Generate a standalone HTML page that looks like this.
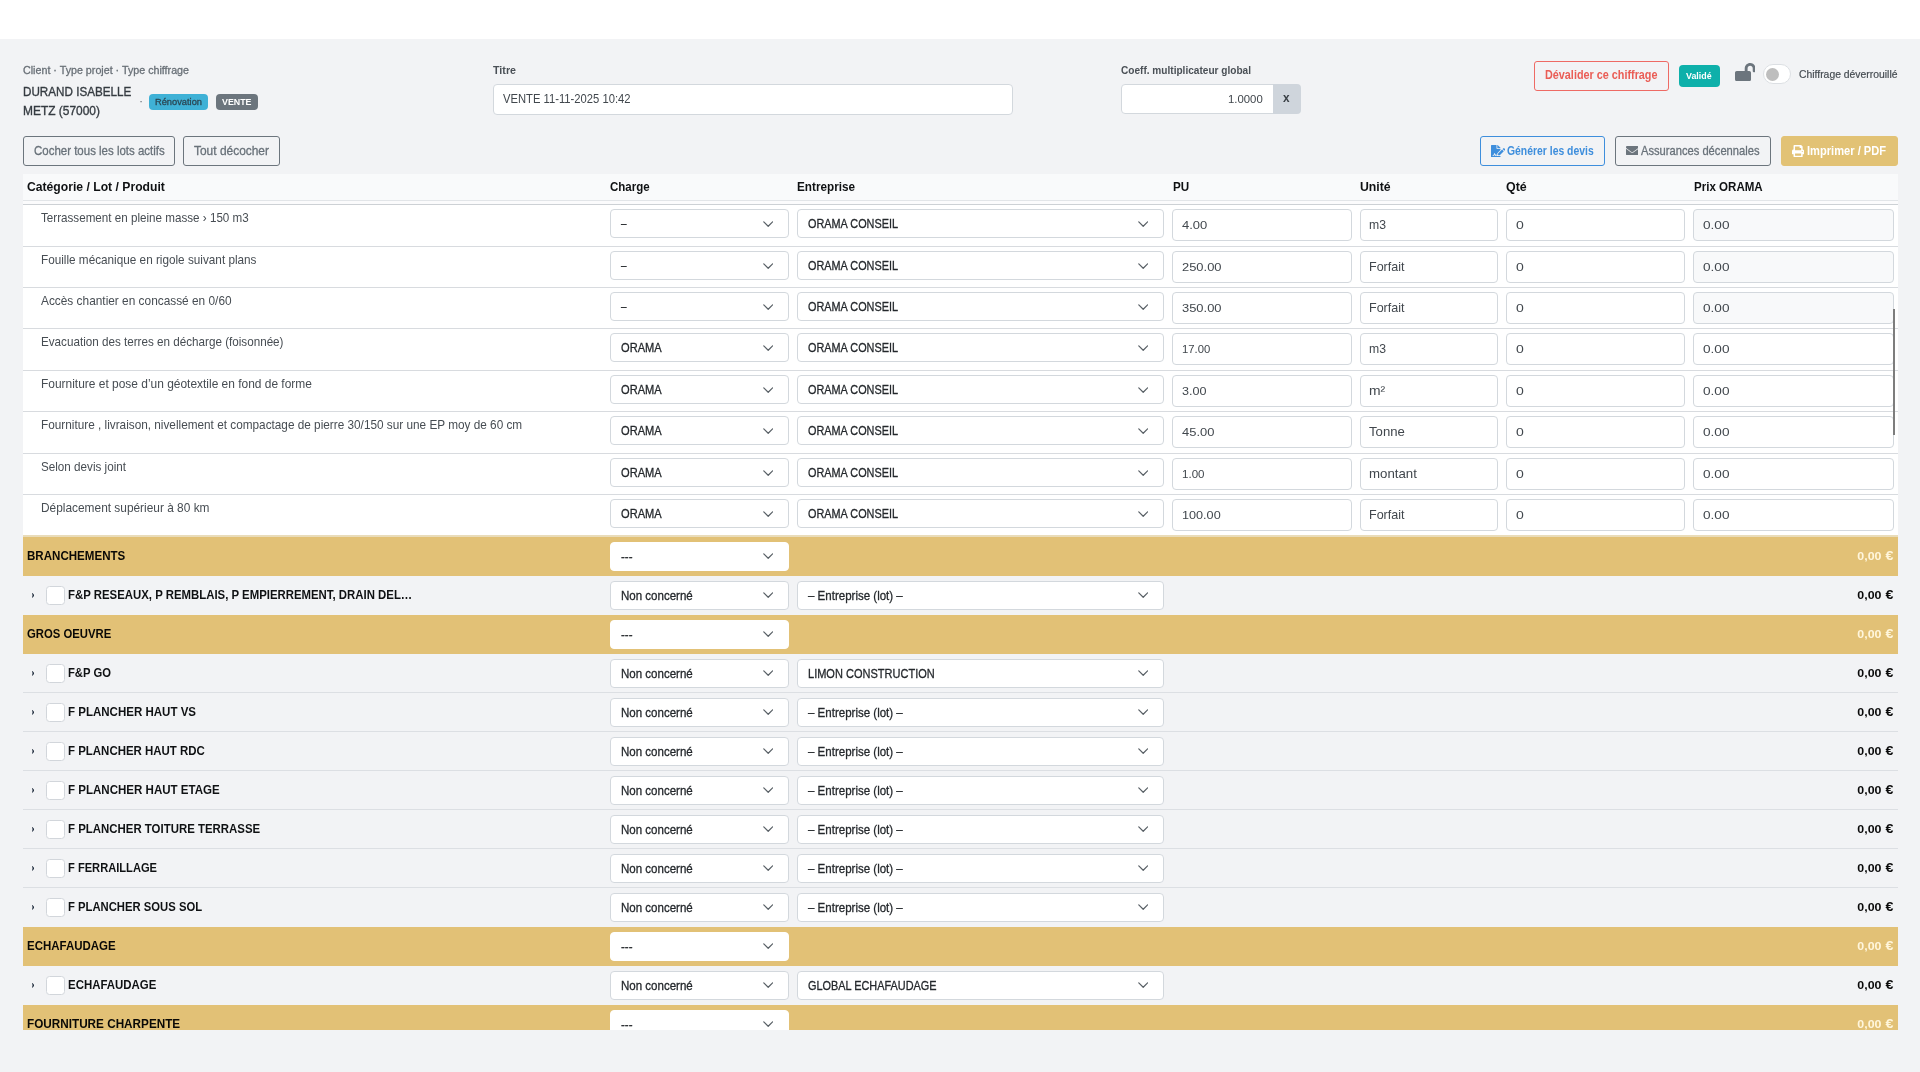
<!DOCTYPE html>
<html lang="fr"><head><meta charset="utf-8"><title>Chiffrage</title>
<style>
*{box-sizing:border-box}
html,body{margin:0;padding:0}
body{width:1920px;height:1072px;overflow:hidden;background:#f2f3f5;font-family:"Liberation Sans",sans-serif;position:relative}
.page{position:absolute;left:0;top:0;width:1920px;height:1072px;will-change:transform}
.topbar{position:absolute;left:0;top:0;width:1920px;height:39px;background:#fff}
.t{position:absolute;white-space:nowrap;line-height:1;display:block}
.badge{position:absolute;border-radius:4px}
.inp,.sel,.addon,.btn,.cb{position:absolute}
.inp{background:#fff;border:1px solid #d3d8dd;border-radius:4px}
.inp.dis{background:#f8f9fa}
.sel{background:#fff;border:1px solid #d3d8dd;border-radius:4px}
.sel.nob{border-color:#fff}
.chev,.ico{position:absolute}
.sw{position:absolute;border-radius:10px;background:#fff;border:1px solid #dcdfe3}
.knob{position:absolute;left:1.8px;top:2.3px;width:13px;height:13px;border-radius:50%;background:#bebebe}
.addon{background:#cfd5dc;border-radius:0 4px 4px 0}
.btn{border:1px solid;border-radius:3px}
.tw{position:absolute;overflow:hidden}
.th{position:absolute;left:0;right:0;background:#f9fafb}
.hl{position:absolute;left:0;right:0;height:1px}
.row{position:absolute;left:0;right:0}
.row.pr{background:#fff}
.row.cat{background:#e2c176}
.row.lot{border-bottom:1px solid #dcdfe3}
.row.lot.nb{border-bottom:none}
.cb{width:18.5px;height:18.5px;background:#fff;border:1px solid #d2d6db;border-radius:3.5px}
</style></head>
<body>
<div class="page">
<div class="topbar"></div>
<div class="hdr">
<span class="t" style="left:23.00px;top:64.85px;font-size:11.4px;font-weight:400;color:#676e75;transform-origin:0 0;transform:scaleX(0.9397);-webkit-text-stroke:0.3px #676e75;">Client · Type projet · Type chiffrage</span>
<span class="t" style="left:23.00px;top:85.25px;font-size:13px;font-weight:400;color:#353b41;transform-origin:0 0;transform:scaleX(0.8976);-webkit-text-stroke:0.35px #353b41;">DURAND ISABELLE</span>
<span class="t" style="left:23.00px;top:104.20px;font-size:13px;font-weight:400;color:#353b41;transform-origin:0 0;transform:scaleX(0.9187);-webkit-text-stroke:0.35px #353b41;">METZ (57000)</span>
<span class="t" style="left:139.00px;top:94.25px;font-size:13px;font-weight:400;color:#6a7178;transform-origin:0 0;transform:scaleX(0.9540);">·</span>
<div class="badge" style="left:149px;top:94px;width:59px;height:15.5px;background:#3fb1d6">
<span class="t" style="left:6.20px;top:2.50px;font-size:9.8px;font-weight:400;color:#2b4653;transform-origin:0 0;transform:scaleX(0.9480);-webkit-text-stroke:0.3px #2b4653;">Rénovation</span>
</div>
<div class="badge" style="left:216px;top:94px;width:42px;height:15.5px;background:#6c757d">
<span class="t" style="left:6.20px;top:2.79px;font-size:9.7px;font-weight:700;color:#ffffff;transform-origin:0 0;transform:scaleX(0.9130);">VENTE</span>
</div>
<span class="t" style="left:493.00px;top:64.85px;font-size:11.4px;font-weight:700;color:#4a5056;transform-origin:0 0;transform:scaleX(0.9394);">Titre</span>
<div class="inp" style="left:493px;top:83.5px;width:520px;height:31px;">
<span class="t" style="left:8.75px;top:7.75px;font-size:13px;font-weight:400;color:#41474d;transform-origin:0 0;transform:scaleX(0.8634);">VENTE 11-11-2025 10:42</span>
</div>
<span class="t" style="left:1120.50px;top:64.85px;font-size:11.4px;font-weight:700;color:#4a5056;transform-origin:0 0;transform:scaleX(0.8854);">Coeff. multiplicateur global</span>
<div class="inp" style="left:1121px;top:83.5px;width:153px;height:30px;border-radius:4px 0 0 4px">
<span class="t" style="left:106.30px;top:9.45px;font-size:11.4px;font-weight:400;color:#41474d;transform-origin:0 0;transform:scaleX(0.9959);">1.0000</span>
</div>
<div class="addon" style="left:1273px;top:83.5px;width:27.5px;height:30px;">
<span class="t" style="left:10.20px;top:8.83px;font-size:12.6px;font-weight:700;color:#3a4046;transform-origin:0 0;transform:scaleX(0.9408);">x</span>
</div>
<div class="btn" style="left:1534px;top:60.75px;width:134.75px;height:30px;border-color:#ee6a64">
<span class="t" style="left:10.20px;top:7.18px;font-size:12.6px;font-weight:700;color:#ea5d55;transform-origin:0 0;transform:scaleX(0.8594);">Dévalider ce chiffrage</span>
</div>
<div class="badge" style="left:1679px;top:65px;width:41px;height:22px;background:#0eb0aa;border-radius:4px">
<span class="t" style="left:6.70px;top:5.80px;font-size:9.8px;font-weight:700;color:#ffffff;transform-origin:0 0;transform:scaleX(0.9037);">Validé</span>
</div>
<svg class="ico" style="left:1734.6px;top:62.8px" width="20.6" height="18.3" viewBox="0 0 576 512"><path fill="#6c757d" d="M423.5 0C339.5.3 272 69.5 272 153.500V224H48c-26.500 0-48 21.500-48 48v192c0 26.500 21.500 48 48 48h352c26.500 0 48-21.500 48-48V272c0-26.500-21.500-48-48-48h-48v-71.100c0-39.600 31.700-72.500 71.300-72.900 40-.400 72.700 32.100 72.700 72v80c0 13.300 10.700 24 24 24h32c13.300 0 24-10.700 24-24v-80C576 68 507.500-.3 423.500 0z"/></svg>
<div class="sw" style="left:1763.2px;top:64.3px;width:28px;height:19.3px"><div class="knob"></div></div>
<span class="t" style="left:1798.80px;top:68.55px;font-size:11.4px;font-weight:400;color:#454b51;transform-origin:0 0;transform:scaleX(0.9115);-webkit-text-stroke:0.2px #454b51;">Chiffrage déverrouillé</span>
</div>
<div class="toolbar">
<div class="btn" style="left:23px;top:136.25px;width:152px;height:29.25px;border-color:#6c757d">
<span class="t" style="left:9.50px;top:7.38px;font-size:12.6px;font-weight:400;color:#687179;transform-origin:0 0;transform:scaleX(0.9111);-webkit-text-stroke:0.3px #687179;">Cocher tous les lots actifs</span>
</div>
<div class="btn" style="left:183px;top:136.25px;width:97px;height:29.25px;border-color:#6c757d">
<span class="t" style="left:10.00px;top:7.38px;font-size:12.6px;font-weight:400;color:#687179;transform-origin:0 0;transform:scaleX(0.9479);-webkit-text-stroke:0.3px #687179;">Tout décocher</span>
</div>
<div class="btn" style="left:1480px;top:136.25px;width:125px;height:29.25px;border-color:#3e8edc">
<svg class="ico" style="left:9.5px;top:7.35px" width="14.2" height="12.6" viewBox="0 0 576 512"><path fill="#3e8edc" d="M218.170 424.140c-2.950-5.920-8.090-6.520-10.170-6.520s-7.220.590-10.020 6.190l-7.670 15.340c-6.370 12.780-25.030 11.370-29.480-2.090L144 386.590l-10.610 31.880c-5.890 17.660-22.380 29.530-41 29.530H80c-8.840 0-16-7.160-16-16s7.160-16 16-16h12.390c4.830 0 9.110-3.080 10.640-7.660l18.190-54.640c3.300-9.810 12.440-16.410 22.780-16.410s19.480 6.590 22.770 16.410l13.880 41.640c19.750-16.190 54.060-9.700 66 14.160 1.890 3.780 5.490 5.950 9.360 6.260v-82.120l128-127.090V160H248c-13.200 0-24-10.800-24-24V0H24C10.700 0 0 10.700 0 24v464c0 13.300 10.700 24 24 24h336c13.300 0 24-10.700 24-24v-40l-128-.110c-16.120-.310-30.580-9.280-37.830-23.750zM384 121.900c0-6.300-2.500-12.400-7-16.900L279.100 7c-4.500-4.500-10.600-7-17-7H256v128h128v-6.100zm-96 225.060V416h68.990l161.680-162.780-67.880-67.880L288 346.960zm280.540-179.630l-31.870-31.870c-9.940-9.940-26.070-9.940-36.010 0l-27.250 27.250 67.880 67.880 27.250-27.250c9.950-9.940 9.950-26.070 0-36.010z"/></svg>
<span class="t" style="left:26.10px;top:7.38px;font-size:12.6px;font-weight:700;color:#3e8edc;transform-origin:0 0;transform:scaleX(0.8256);">Générer les devis</span>
</div>
<div class="btn" style="left:1615px;top:136.25px;width:156px;height:29.25px;border-color:#6c757d">
<svg class="ico" style="left:10.1px;top:8.95px" width="12.4" height="9.3" viewBox="0 0 512 384"><path fill="#6c757d" d="M502.300 126.800c3.900-3.100 9.700-.200 9.700 4.700V336c0 26.500-21.500 48-48 48H48c-26.500 0-48-21.500-48-48V131.600c0-5 5.700-7.800 9.700-4.700 22.400 17.400 52.100 39.500 154.100 113.600 21.100 15.400 56.700 47.800 92.200 47.600 35.700.300 72-32.800 92.300-47.600 102-74.100 131.600-96.300 154-113.700zM256 256c23.200.400 56.600-29.200 73.400-41.400 132.700-96.300 142.800-104.700 173.400-128.700 5.800-4.500 9.200-11.500 9.200-18.900V48c0-26.500-21.500-48-48-48H48C21.500 0 0 21.500 0 48v19c0 7.400 3.400 14.300 9.200 18.900 30.600 23.900 40.700 32.400 173.400 128.700 16.800 12.200 50.200 41.800 73.400 41.400z"/></svg>
<span class="t" style="left:25.40px;top:7.38px;font-size:12.6px;font-weight:400;color:#687179;transform-origin:0 0;transform:scaleX(0.8862);-webkit-text-stroke:0.3px #687179;">Assurances décennales</span>
</div>
<div class="btn" style="left:1781px;top:136.25px;width:117px;height:29.25px;border-color:#e2c275;background:#e2c275">
<svg class="ico" style="left:10px;top:7.35px" width="12.2" height="12.2" viewBox="0 0 512 512"><path fill="#fff" d="M448 192V77.250c0-8.490-3.370-16.620-9.370-22.630L393.370 9.370c-6-6-14.140-9.370-22.630-9.370H96C78.330 0 64 14.330 64 32v160c-35.350 0-64 28.650-64 64v112c0 8.840 7.160 16 16 16h48v96c0 17.670 14.330 32 32 32h320c17.670 0 32-14.330 32-32v-96h48c8.840 0 16-7.160 16-16V256c0-35.350-28.650-64-64-64zm-64 256H128v-96h256v96zm0-224H128V64h192v48c0 8.840 7.160 16 16 16h48v96zm48 72c-13.250 0-24-10.750-24-24 0-13.260 10.750-24 24-24s24 10.740 24 24c0 13.250-10.750 24-24 24z"/></svg>
<span class="t" style="left:25.30px;top:7.38px;font-size:12.6px;font-weight:700;color:#ffffff;transform-origin:0 0;transform:scaleX(0.8830);">Imprimer / PDF</span>
</div>
</div>
<div class="tw" style="left:23px;top:174px;width:1875px;height:855.5px">
<div class="hl" style="top:26px;background:#e2e5e8"></div>
<div style="position:absolute;left:0;right:0;top:27px;height:3px;background:#fbfbfc"></div>
<div class="th" style="top:0;height:26px">
<span class="t" style="left:3.60px;top:6.30px;font-size:13px;font-weight:700;color:#0f1113;transform-origin:0 0;transform:scaleX(0.9359);">Catégorie / Lot / Produit</span>
<span class="t" style="left:586.50px;top:6.30px;font-size:13px;font-weight:700;color:#0f1113;transform-origin:0 0;transform:scaleX(0.8862);">Charge</span>
<span class="t" style="left:774.30px;top:6.30px;font-size:13px;font-weight:700;color:#0f1113;transform-origin:0 0;transform:scaleX(0.9018);">Entreprise</span>
<span class="t" style="left:1149.50px;top:6.30px;font-size:13px;font-weight:700;color:#0f1113;transform-origin:0 0;transform:scaleX(0.8969);">PU</span>
<span class="t" style="left:1337.00px;top:6.30px;font-size:13px;font-weight:700;color:#0f1113;transform-origin:0 0;transform:scaleX(0.9446);">Unité</span>
<span class="t" style="left:1483.00px;top:6.30px;font-size:13px;font-weight:700;color:#0f1113;transform-origin:0 0;transform:scaleX(0.9552);">Qté</span>
<span class="t" style="left:1670.50px;top:6.30px;font-size:13px;font-weight:700;color:#0f1113;transform-origin:0 0;transform:scaleX(0.8888);">Prix ORAMA</span>
</div>
<div class="row pr" style="top:30px;height:42px"><div class="hl" style="top:0;background:#cdd1d5"></div>
<span class="t" style="left:17.75px;top:6.90px;font-size:13px;font-weight:400;color:#474d53;transform-origin:0 0;transform:scaleX(0.8957);">Terrassement en pleine masse › 150 m3</span>
<div class="sel" style="left:587.25px;top:5.10px;width:178.25px;height:29.25px"><svg class="chev" style="left:151.35px;top:10.43px" viewBox="0 0 11 7" width="10.4" height="6.6"><path d="M0.8 0.9 L5.5 5.6 L10.2 0.9" fill="none" stroke="#596066" stroke-width="1.3" stroke-linecap="round" stroke-linejoin="round"/></svg><span class="t" style="left:9.50px;top:7.12px;font-size:13px;font-weight:400;color:#24282c;transform-origin:0 0;transform:scaleX(0.7603);-webkit-text-stroke:0.3px #24282c;">–</span></div>
<div class="sel" style="left:774.25px;top:5.10px;width:366.25px;height:29.25px"><svg class="chev" style="left:339.35px;top:10.43px" viewBox="0 0 11 7" width="10.4" height="6.6"><path d="M0.8 0.9 L5.5 5.6 L10.2 0.9" fill="none" stroke="#596066" stroke-width="1.3" stroke-linecap="round" stroke-linejoin="round"/></svg><span class="t" style="left:9.50px;top:7.12px;font-size:13px;font-weight:400;color:#24282c;transform-origin:0 0;transform:scaleX(0.8361);-webkit-text-stroke:0.3px #24282c;">ORAMA CONSEIL</span></div>
<div class="inp" style="left:1149.25px;top:5.10px;width:179.25px;height:32.20px"><span class="t" style="left:8.40px;top:10.21px;font-size:11.8px;font-weight:400;color:#41474d;transform-origin:0 0;transform:scaleX(1.1015);">4.00</span></div>
<div class="inp" style="left:1337.25px;top:5.10px;width:137.25px;height:32.20px"><span class="t" style="left:7.30px;top:7.96px;font-size:13.4px;font-weight:400;color:#41474d;transform-origin:0 0;transform:scaleX(0.9135);">m3</span></div>
<div class="inp" style="left:1483.25px;top:5.10px;width:178.25px;height:32.20px"><span class="t" style="left:8.40px;top:10.21px;font-size:11.8px;font-weight:400;color:#41474d;transform-origin:0 0;transform:scaleX(1.1886);">0</span></div>
<div class="inp dis" style="left:1670.25px;top:5.10px;width:200.50px;height:32.20px"><span class="t" style="left:8.40px;top:10.21px;font-size:11.8px;font-weight:400;color:#41474d;transform-origin:0 0;transform:scaleX(1.1537);">0.00</span></div>
</div>
<div class="row pr" style="top:72px;height:41px"><div class="hl" style="top:0;background:#d8dbdf"></div>
<span class="t" style="left:17.75px;top:6.90px;font-size:13px;font-weight:400;color:#474d53;transform-origin:0 0;transform:scaleX(0.9036);">Fouille mécanique en rigole suivant plans</span>
<div class="sel" style="left:587.25px;top:5.10px;width:178.25px;height:29.25px"><svg class="chev" style="left:151.35px;top:10.43px" viewBox="0 0 11 7" width="10.4" height="6.6"><path d="M0.8 0.9 L5.5 5.6 L10.2 0.9" fill="none" stroke="#596066" stroke-width="1.3" stroke-linecap="round" stroke-linejoin="round"/></svg><span class="t" style="left:9.50px;top:7.12px;font-size:13px;font-weight:400;color:#24282c;transform-origin:0 0;transform:scaleX(0.7603);-webkit-text-stroke:0.3px #24282c;">–</span></div>
<div class="sel" style="left:774.25px;top:5.10px;width:366.25px;height:29.25px"><svg class="chev" style="left:339.35px;top:10.43px" viewBox="0 0 11 7" width="10.4" height="6.6"><path d="M0.8 0.9 L5.5 5.6 L10.2 0.9" fill="none" stroke="#596066" stroke-width="1.3" stroke-linecap="round" stroke-linejoin="round"/></svg><span class="t" style="left:9.50px;top:7.12px;font-size:13px;font-weight:400;color:#24282c;transform-origin:0 0;transform:scaleX(0.8361);-webkit-text-stroke:0.3px #24282c;">ORAMA CONSEIL</span></div>
<div class="inp" style="left:1149.25px;top:5.10px;width:179.25px;height:32.20px"><span class="t" style="left:8.40px;top:10.21px;font-size:11.8px;font-weight:400;color:#41474d;transform-origin:0 0;transform:scaleX(1.0944);">250.00</span></div>
<div class="inp" style="left:1337.25px;top:5.10px;width:137.25px;height:32.20px"><span class="t" style="left:7.30px;top:7.96px;font-size:13.4px;font-weight:400;color:#41474d;transform-origin:0 0;transform:scaleX(0.9354);">Forfait</span></div>
<div class="inp" style="left:1483.25px;top:5.10px;width:178.25px;height:32.20px"><span class="t" style="left:8.40px;top:10.21px;font-size:11.8px;font-weight:400;color:#41474d;transform-origin:0 0;transform:scaleX(1.1886);">0</span></div>
<div class="inp dis" style="left:1670.25px;top:5.10px;width:200.50px;height:32.20px"><span class="t" style="left:8.40px;top:10.21px;font-size:11.8px;font-weight:400;color:#41474d;transform-origin:0 0;transform:scaleX(1.1537);">0.00</span></div>
</div>
<div class="row pr" style="top:113px;height:41px"><div class="hl" style="top:0;background:#d8dbdf"></div>
<span class="t" style="left:17.75px;top:6.90px;font-size:13px;font-weight:400;color:#474d53;transform-origin:0 0;transform:scaleX(0.9126);">Accès chantier en concassé en 0/60</span>
<div class="sel" style="left:587.25px;top:5.10px;width:178.25px;height:29.25px"><svg class="chev" style="left:151.35px;top:10.43px" viewBox="0 0 11 7" width="10.4" height="6.6"><path d="M0.8 0.9 L5.5 5.6 L10.2 0.9" fill="none" stroke="#596066" stroke-width="1.3" stroke-linecap="round" stroke-linejoin="round"/></svg><span class="t" style="left:9.50px;top:7.12px;font-size:13px;font-weight:400;color:#24282c;transform-origin:0 0;transform:scaleX(0.7603);-webkit-text-stroke:0.3px #24282c;">–</span></div>
<div class="sel" style="left:774.25px;top:5.10px;width:366.25px;height:29.25px"><svg class="chev" style="left:339.35px;top:10.43px" viewBox="0 0 11 7" width="10.4" height="6.6"><path d="M0.8 0.9 L5.5 5.6 L10.2 0.9" fill="none" stroke="#596066" stroke-width="1.3" stroke-linecap="round" stroke-linejoin="round"/></svg><span class="t" style="left:9.50px;top:7.12px;font-size:13px;font-weight:400;color:#24282c;transform-origin:0 0;transform:scaleX(0.8361);-webkit-text-stroke:0.3px #24282c;">ORAMA CONSEIL</span></div>
<div class="inp" style="left:1149.25px;top:5.10px;width:179.25px;height:32.20px"><span class="t" style="left:8.40px;top:10.21px;font-size:11.8px;font-weight:400;color:#41474d;transform-origin:0 0;transform:scaleX(1.0944);">350.00</span></div>
<div class="inp" style="left:1337.25px;top:5.10px;width:137.25px;height:32.20px"><span class="t" style="left:7.30px;top:7.96px;font-size:13.4px;font-weight:400;color:#41474d;transform-origin:0 0;transform:scaleX(0.9354);">Forfait</span></div>
<div class="inp" style="left:1483.25px;top:5.10px;width:178.25px;height:32.20px"><span class="t" style="left:8.40px;top:10.21px;font-size:11.8px;font-weight:400;color:#41474d;transform-origin:0 0;transform:scaleX(1.1886);">0</span></div>
<div class="inp dis" style="left:1670.25px;top:5.10px;width:200.50px;height:32.20px"><span class="t" style="left:8.40px;top:10.21px;font-size:11.8px;font-weight:400;color:#41474d;transform-origin:0 0;transform:scaleX(1.1537);">0.00</span></div>
</div>
<div class="row pr" style="top:154px;height:42px"><div class="hl" style="top:0;background:#d8dbdf"></div>
<span class="t" style="left:17.75px;top:6.90px;font-size:13px;font-weight:400;color:#474d53;transform-origin:0 0;transform:scaleX(0.8972);">Evacuation des terres en décharge (foisonnée)</span>
<div class="sel" style="left:587.25px;top:5.10px;width:178.25px;height:29.25px"><svg class="chev" style="left:151.35px;top:10.43px" viewBox="0 0 11 7" width="10.4" height="6.6"><path d="M0.8 0.9 L5.5 5.6 L10.2 0.9" fill="none" stroke="#596066" stroke-width="1.3" stroke-linecap="round" stroke-linejoin="round"/></svg><span class="t" style="left:9.50px;top:7.12px;font-size:13px;font-weight:400;color:#24282c;transform-origin:0 0;transform:scaleX(0.8538);-webkit-text-stroke:0.3px #24282c;">ORAMA</span></div>
<div class="sel" style="left:774.25px;top:5.10px;width:366.25px;height:29.25px"><svg class="chev" style="left:339.35px;top:10.43px" viewBox="0 0 11 7" width="10.4" height="6.6"><path d="M0.8 0.9 L5.5 5.6 L10.2 0.9" fill="none" stroke="#596066" stroke-width="1.3" stroke-linecap="round" stroke-linejoin="round"/></svg><span class="t" style="left:9.50px;top:7.12px;font-size:13px;font-weight:400;color:#24282c;transform-origin:0 0;transform:scaleX(0.8361);-webkit-text-stroke:0.3px #24282c;">ORAMA CONSEIL</span></div>
<div class="inp" style="left:1149.25px;top:5.10px;width:179.25px;height:32.20px"><span class="t" style="left:8.40px;top:10.21px;font-size:11.8px;font-weight:400;color:#41474d;transform-origin:0 0;transform:scaleX(0.9583);">17.00</span></div>
<div class="inp" style="left:1337.25px;top:5.10px;width:137.25px;height:32.20px"><span class="t" style="left:7.30px;top:7.96px;font-size:13.4px;font-weight:400;color:#41474d;transform-origin:0 0;transform:scaleX(0.9135);">m3</span></div>
<div class="inp" style="left:1483.25px;top:5.10px;width:178.25px;height:32.20px"><span class="t" style="left:8.40px;top:10.21px;font-size:11.8px;font-weight:400;color:#41474d;transform-origin:0 0;transform:scaleX(1.1886);">0</span></div>
<div class="inp" style="left:1670.25px;top:5.10px;width:200.50px;height:32.20px"><span class="t" style="left:8.40px;top:10.21px;font-size:11.8px;font-weight:400;color:#41474d;transform-origin:0 0;transform:scaleX(1.1537);">0.00</span></div>
</div>
<div class="row pr" style="top:196px;height:41px"><div class="hl" style="top:0;background:#d8dbdf"></div>
<span class="t" style="left:17.75px;top:6.90px;font-size:13px;font-weight:400;color:#474d53;transform-origin:0 0;transform:scaleX(0.9187);">Fourniture et pose d’un géotextile en fond de forme</span>
<div class="sel" style="left:587.25px;top:5.10px;width:178.25px;height:29.25px"><svg class="chev" style="left:151.35px;top:10.43px" viewBox="0 0 11 7" width="10.4" height="6.6"><path d="M0.8 0.9 L5.5 5.6 L10.2 0.9" fill="none" stroke="#596066" stroke-width="1.3" stroke-linecap="round" stroke-linejoin="round"/></svg><span class="t" style="left:9.50px;top:7.12px;font-size:13px;font-weight:400;color:#24282c;transform-origin:0 0;transform:scaleX(0.8538);-webkit-text-stroke:0.3px #24282c;">ORAMA</span></div>
<div class="sel" style="left:774.25px;top:5.10px;width:366.25px;height:29.25px"><svg class="chev" style="left:339.35px;top:10.43px" viewBox="0 0 11 7" width="10.4" height="6.6"><path d="M0.8 0.9 L5.5 5.6 L10.2 0.9" fill="none" stroke="#596066" stroke-width="1.3" stroke-linecap="round" stroke-linejoin="round"/></svg><span class="t" style="left:9.50px;top:7.12px;font-size:13px;font-weight:400;color:#24282c;transform-origin:0 0;transform:scaleX(0.8361);-webkit-text-stroke:0.3px #24282c;">ORAMA CONSEIL</span></div>
<div class="inp" style="left:1149.25px;top:5.10px;width:179.25px;height:32.20px"><span class="t" style="left:8.40px;top:10.21px;font-size:11.8px;font-weight:400;color:#41474d;transform-origin:0 0;transform:scaleX(1.0667);">3.00</span></div>
<div class="inp" style="left:1337.25px;top:5.10px;width:137.25px;height:32.20px"><span class="t" style="left:7.30px;top:7.96px;font-size:13.4px;font-weight:400;color:#41474d;transform-origin:0 0;transform:scaleX(1.0368);">m²</span></div>
<div class="inp" style="left:1483.25px;top:5.10px;width:178.25px;height:32.20px"><span class="t" style="left:8.40px;top:10.21px;font-size:11.8px;font-weight:400;color:#41474d;transform-origin:0 0;transform:scaleX(1.1886);">0</span></div>
<div class="inp" style="left:1670.25px;top:5.10px;width:200.50px;height:32.20px"><span class="t" style="left:8.40px;top:10.21px;font-size:11.8px;font-weight:400;color:#41474d;transform-origin:0 0;transform:scaleX(1.1537);">0.00</span></div>
</div>
<div class="row pr" style="top:237px;height:42px"><div class="hl" style="top:0;background:#d8dbdf"></div>
<span class="t" style="left:17.75px;top:6.90px;font-size:13px;font-weight:400;color:#474d53;transform-origin:0 0;transform:scaleX(0.9064);">Fourniture , livraison, nivellement et compactage de pierre 30/150 sur une EP moy de 60 cm</span>
<div class="sel" style="left:587.25px;top:5.10px;width:178.25px;height:29.25px"><svg class="chev" style="left:151.35px;top:10.43px" viewBox="0 0 11 7" width="10.4" height="6.6"><path d="M0.8 0.9 L5.5 5.6 L10.2 0.9" fill="none" stroke="#596066" stroke-width="1.3" stroke-linecap="round" stroke-linejoin="round"/></svg><span class="t" style="left:9.50px;top:7.12px;font-size:13px;font-weight:400;color:#24282c;transform-origin:0 0;transform:scaleX(0.8538);-webkit-text-stroke:0.3px #24282c;">ORAMA</span></div>
<div class="sel" style="left:774.25px;top:5.10px;width:366.25px;height:29.25px"><svg class="chev" style="left:339.35px;top:10.43px" viewBox="0 0 11 7" width="10.4" height="6.6"><path d="M0.8 0.9 L5.5 5.6 L10.2 0.9" fill="none" stroke="#596066" stroke-width="1.3" stroke-linecap="round" stroke-linejoin="round"/></svg><span class="t" style="left:9.50px;top:7.12px;font-size:13px;font-weight:400;color:#24282c;transform-origin:0 0;transform:scaleX(0.8361);-webkit-text-stroke:0.3px #24282c;">ORAMA CONSEIL</span></div>
<div class="inp" style="left:1149.25px;top:5.10px;width:179.25px;height:32.20px"><span class="t" style="left:8.40px;top:10.21px;font-size:11.8px;font-weight:400;color:#41474d;transform-origin:0 0;transform:scaleX(1.0971);">45.00</span></div>
<div class="inp" style="left:1337.25px;top:5.10px;width:137.25px;height:32.20px"><span class="t" style="left:7.30px;top:7.96px;font-size:13.4px;font-weight:400;color:#41474d;transform-origin:0 0;transform:scaleX(0.9812);">Tonne</span></div>
<div class="inp" style="left:1483.25px;top:5.10px;width:178.25px;height:32.20px"><span class="t" style="left:8.40px;top:10.21px;font-size:11.8px;font-weight:400;color:#41474d;transform-origin:0 0;transform:scaleX(1.1886);">0</span></div>
<div class="inp" style="left:1670.25px;top:5.10px;width:200.50px;height:32.20px"><span class="t" style="left:8.40px;top:10.21px;font-size:11.8px;font-weight:400;color:#41474d;transform-origin:0 0;transform:scaleX(1.1537);">0.00</span></div>
</div>
<div class="row pr" style="top:279px;height:41px"><div class="hl" style="top:0;background:#d8dbdf"></div>
<span class="t" style="left:17.75px;top:6.90px;font-size:13px;font-weight:400;color:#474d53;transform-origin:0 0;transform:scaleX(0.8978);">Selon devis joint</span>
<div class="sel" style="left:587.25px;top:5.10px;width:178.25px;height:29.25px"><svg class="chev" style="left:151.35px;top:10.43px" viewBox="0 0 11 7" width="10.4" height="6.6"><path d="M0.8 0.9 L5.5 5.6 L10.2 0.9" fill="none" stroke="#596066" stroke-width="1.3" stroke-linecap="round" stroke-linejoin="round"/></svg><span class="t" style="left:9.50px;top:7.12px;font-size:13px;font-weight:400;color:#24282c;transform-origin:0 0;transform:scaleX(0.8538);-webkit-text-stroke:0.3px #24282c;">ORAMA</span></div>
<div class="sel" style="left:774.25px;top:5.10px;width:366.25px;height:29.25px"><svg class="chev" style="left:339.35px;top:10.43px" viewBox="0 0 11 7" width="10.4" height="6.6"><path d="M0.8 0.9 L5.5 5.6 L10.2 0.9" fill="none" stroke="#596066" stroke-width="1.3" stroke-linecap="round" stroke-linejoin="round"/></svg><span class="t" style="left:9.50px;top:7.12px;font-size:13px;font-weight:400;color:#24282c;transform-origin:0 0;transform:scaleX(0.8361);-webkit-text-stroke:0.3px #24282c;">ORAMA CONSEIL</span></div>
<div class="inp" style="left:1149.25px;top:5.10px;width:179.25px;height:32.20px"><span class="t" style="left:8.40px;top:10.21px;font-size:11.8px;font-weight:400;color:#41474d;transform-origin:0 0;transform:scaleX(0.9796);">1.00</span></div>
<div class="inp" style="left:1337.25px;top:5.10px;width:137.25px;height:32.20px"><span class="t" style="left:7.30px;top:7.96px;font-size:13.4px;font-weight:400;color:#41474d;transform-origin:0 0;transform:scaleX(0.9899);">montant</span></div>
<div class="inp" style="left:1483.25px;top:5.10px;width:178.25px;height:32.20px"><span class="t" style="left:8.40px;top:10.21px;font-size:11.8px;font-weight:400;color:#41474d;transform-origin:0 0;transform:scaleX(1.1886);">0</span></div>
<div class="inp" style="left:1670.25px;top:5.10px;width:200.50px;height:32.20px"><span class="t" style="left:8.40px;top:10.21px;font-size:11.8px;font-weight:400;color:#41474d;transform-origin:0 0;transform:scaleX(1.1537);">0.00</span></div>
</div>
<div class="row pr" style="top:320px;height:41px"><div class="hl" style="top:0;background:#d8dbdf"></div>
<span class="t" style="left:17.75px;top:6.90px;font-size:13px;font-weight:400;color:#474d53;transform-origin:0 0;transform:scaleX(0.9144);">Déplacement supérieur à 80 km</span>
<div class="sel" style="left:587.25px;top:5.10px;width:178.25px;height:29.25px"><svg class="chev" style="left:151.35px;top:10.43px" viewBox="0 0 11 7" width="10.4" height="6.6"><path d="M0.8 0.9 L5.5 5.6 L10.2 0.9" fill="none" stroke="#596066" stroke-width="1.3" stroke-linecap="round" stroke-linejoin="round"/></svg><span class="t" style="left:9.50px;top:7.12px;font-size:13px;font-weight:400;color:#24282c;transform-origin:0 0;transform:scaleX(0.8538);-webkit-text-stroke:0.3px #24282c;">ORAMA</span></div>
<div class="sel" style="left:774.25px;top:5.10px;width:366.25px;height:29.25px"><svg class="chev" style="left:339.35px;top:10.43px" viewBox="0 0 11 7" width="10.4" height="6.6"><path d="M0.8 0.9 L5.5 5.6 L10.2 0.9" fill="none" stroke="#596066" stroke-width="1.3" stroke-linecap="round" stroke-linejoin="round"/></svg><span class="t" style="left:9.50px;top:7.12px;font-size:13px;font-weight:400;color:#24282c;transform-origin:0 0;transform:scaleX(0.8361);-webkit-text-stroke:0.3px #24282c;">ORAMA CONSEIL</span></div>
<div class="inp" style="left:1149.25px;top:5.10px;width:179.25px;height:32.20px"><span class="t" style="left:8.40px;top:10.21px;font-size:11.8px;font-weight:400;color:#41474d;transform-origin:0 0;transform:scaleX(1.0722);">100.00</span></div>
<div class="inp" style="left:1337.25px;top:5.10px;width:137.25px;height:32.20px"><span class="t" style="left:7.30px;top:7.96px;font-size:13.4px;font-weight:400;color:#41474d;transform-origin:0 0;transform:scaleX(0.9354);">Forfait</span></div>
<div class="inp" style="left:1483.25px;top:5.10px;width:178.25px;height:32.20px"><span class="t" style="left:8.40px;top:10.21px;font-size:11.8px;font-weight:400;color:#41474d;transform-origin:0 0;transform:scaleX(1.1886);">0</span></div>
<div class="inp" style="left:1670.25px;top:5.10px;width:200.50px;height:32.20px"><span class="t" style="left:8.40px;top:10.21px;font-size:11.8px;font-weight:400;color:#41474d;transform-origin:0 0;transform:scaleX(1.1537);">0.00</span></div>
</div>
<div class="row cat" style="top:361px;height:40.5px">
<div style="position:absolute;left:0;right:0;top:0;height:2px;background:#e9dcba"></div>
<span class="t" style="left:3.70px;top:14.10px;font-size:13px;font-weight:700;color:#0a0906;transform-origin:0 0;transform:scaleX(0.8891);">BRANCHEMENTS</span>
<div class="sel nob" style="left:587.25px;top:6.70px;width:178.25px;height:29.00px"><svg class="chev" style="left:151.35px;top:10.30px" viewBox="0 0 11 7" width="10.4" height="6.6"><path d="M0.8 0.9 L5.5 5.6 L10.2 0.9" fill="none" stroke="#596066" stroke-width="1.3" stroke-linecap="round" stroke-linejoin="round"/></svg><span class="t" style="left:9.50px;top:7.00px;font-size:13px;font-weight:400;color:#24282c;transform-origin:0 0;transform:scaleX(0.8846);-webkit-text-stroke:0.3px #24282c;">---</span></div>
<span class="t" style="right:5.10px;top:14.76px;font-size:12.8px;font-weight:700;color:#fff6dc;transform-origin:100% 0;transform:scaleX(1.1130);"><span style="font-size:.87em">0,00</span> €</span>
</div>
<div class="row lot nb" style="top:401.5px;height:39px">
<svg style="position:absolute;left:8.6px;top:17.6px" width="2.7" height="4.7" viewBox="0 0 3 5.2"><path d="M0 0 L0.5 0 L3 2.6 L0.5 5.2 L0 5.2 L0.6 2.6 Z" fill="#243040"/></svg>
<div class="cb" style="left:23.25px;top:10.6px"></div>
<span class="t" style="left:45.25px;top:12.70px;font-size:13px;font-weight:700;color:#0f1113;transform-origin:0 0;transform:scaleX(0.8761);">F&amp;P RESEAUX, P REMBLAIS, P EMPIERREMENT, DRAIN DEL…</span>
<div class="sel" style="left:587.25px;top:5.00px;width:178.25px;height:29.00px"><svg class="chev" style="left:151.35px;top:10.30px" viewBox="0 0 11 7" width="10.4" height="6.6"><path d="M0.8 0.9 L5.5 5.6 L10.2 0.9" fill="none" stroke="#596066" stroke-width="1.3" stroke-linecap="round" stroke-linejoin="round"/></svg><span class="t" style="left:9.50px;top:7.00px;font-size:13px;font-weight:400;color:#24282c;transform-origin:0 0;transform:scaleX(0.8863);-webkit-text-stroke:0.3px #24282c;">Non concerné</span></div>
<div class="sel" style="left:774.25px;top:5.00px;width:366.25px;height:29.00px"><svg class="chev" style="left:339.35px;top:10.30px" viewBox="0 0 11 7" width="10.4" height="6.6"><path d="M0.8 0.9 L5.5 5.6 L10.2 0.9" fill="none" stroke="#596066" stroke-width="1.3" stroke-linecap="round" stroke-linejoin="round"/></svg><span class="t" style="left:9.50px;top:7.00px;font-size:13px;font-weight:400;color:#24282c;transform-origin:0 0;transform:scaleX(0.8860);-webkit-text-stroke:0.3px #24282c;">– Entreprise (lot) –</span></div>
<span class="t" style="right:5.10px;top:13.26px;font-size:12.8px;font-weight:700;color:#0a0a0a;transform-origin:100% 0;transform:scaleX(1.1130);"><span style="font-size:.87em">0,00</span> €</span>
</div>
<div class="row cat" style="top:440.5px;height:39px">
<span class="t" style="left:3.70px;top:12.60px;font-size:13px;font-weight:700;color:#0a0906;transform-origin:0 0;transform:scaleX(0.8704);">GROS OEUVRE</span>
<div class="sel nob" style="left:587.25px;top:5.20px;width:178.25px;height:29.00px"><svg class="chev" style="left:151.35px;top:10.30px" viewBox="0 0 11 7" width="10.4" height="6.6"><path d="M0.8 0.9 L5.5 5.6 L10.2 0.9" fill="none" stroke="#596066" stroke-width="1.3" stroke-linecap="round" stroke-linejoin="round"/></svg><span class="t" style="left:9.50px;top:7.00px;font-size:13px;font-weight:400;color:#24282c;transform-origin:0 0;transform:scaleX(0.8846);-webkit-text-stroke:0.3px #24282c;">---</span></div>
<span class="t" style="right:5.10px;top:13.26px;font-size:12.8px;font-weight:700;color:#fff6dc;transform-origin:100% 0;transform:scaleX(1.1130);"><span style="font-size:.87em">0,00</span> €</span>
</div>
<div class="row lot" style="top:479.5px;height:39px">
<svg style="position:absolute;left:8.6px;top:17.6px" width="2.7" height="4.7" viewBox="0 0 3 5.2"><path d="M0 0 L0.5 0 L3 2.6 L0.5 5.2 L0 5.2 L0.6 2.6 Z" fill="#243040"/></svg>
<div class="cb" style="left:23.25px;top:10.6px"></div>
<span class="t" style="left:45.25px;top:12.70px;font-size:13px;font-weight:700;color:#0f1113;transform-origin:0 0;transform:scaleX(0.8648);">F&amp;P GO</span>
<div class="sel" style="left:587.25px;top:5.00px;width:178.25px;height:29.00px"><svg class="chev" style="left:151.35px;top:10.30px" viewBox="0 0 11 7" width="10.4" height="6.6"><path d="M0.8 0.9 L5.5 5.6 L10.2 0.9" fill="none" stroke="#596066" stroke-width="1.3" stroke-linecap="round" stroke-linejoin="round"/></svg><span class="t" style="left:9.50px;top:7.00px;font-size:13px;font-weight:400;color:#24282c;transform-origin:0 0;transform:scaleX(0.8863);-webkit-text-stroke:0.3px #24282c;">Non concerné</span></div>
<div class="sel" style="left:774.25px;top:5.00px;width:366.25px;height:29.00px"><svg class="chev" style="left:339.35px;top:10.30px" viewBox="0 0 11 7" width="10.4" height="6.6"><path d="M0.8 0.9 L5.5 5.6 L10.2 0.9" fill="none" stroke="#596066" stroke-width="1.3" stroke-linecap="round" stroke-linejoin="round"/></svg><span class="t" style="left:9.50px;top:7.00px;font-size:13px;font-weight:400;color:#24282c;transform-origin:0 0;transform:scaleX(0.8478);-webkit-text-stroke:0.3px #24282c;">LIMON CONSTRUCTION</span></div>
<span class="t" style="right:5.10px;top:13.26px;font-size:12.8px;font-weight:700;color:#0a0a0a;transform-origin:100% 0;transform:scaleX(1.1130);"><span style="font-size:.87em">0,00</span> €</span>
</div>
<div class="row lot" style="top:518.5px;height:39px">
<svg style="position:absolute;left:8.6px;top:17.6px" width="2.7" height="4.7" viewBox="0 0 3 5.2"><path d="M0 0 L0.5 0 L3 2.6 L0.5 5.2 L0 5.2 L0.6 2.6 Z" fill="#243040"/></svg>
<div class="cb" style="left:23.25px;top:10.6px"></div>
<span class="t" style="left:45.25px;top:12.70px;font-size:13px;font-weight:700;color:#0f1113;transform-origin:0 0;transform:scaleX(0.8861);">F PLANCHER HAUT VS</span>
<div class="sel" style="left:587.25px;top:5.00px;width:178.25px;height:29.00px"><svg class="chev" style="left:151.35px;top:10.30px" viewBox="0 0 11 7" width="10.4" height="6.6"><path d="M0.8 0.9 L5.5 5.6 L10.2 0.9" fill="none" stroke="#596066" stroke-width="1.3" stroke-linecap="round" stroke-linejoin="round"/></svg><span class="t" style="left:9.50px;top:7.00px;font-size:13px;font-weight:400;color:#24282c;transform-origin:0 0;transform:scaleX(0.8863);-webkit-text-stroke:0.3px #24282c;">Non concerné</span></div>
<div class="sel" style="left:774.25px;top:5.00px;width:366.25px;height:29.00px"><svg class="chev" style="left:339.35px;top:10.30px" viewBox="0 0 11 7" width="10.4" height="6.6"><path d="M0.8 0.9 L5.5 5.6 L10.2 0.9" fill="none" stroke="#596066" stroke-width="1.3" stroke-linecap="round" stroke-linejoin="round"/></svg><span class="t" style="left:9.50px;top:7.00px;font-size:13px;font-weight:400;color:#24282c;transform-origin:0 0;transform:scaleX(0.8860);-webkit-text-stroke:0.3px #24282c;">– Entreprise (lot) –</span></div>
<span class="t" style="right:5.10px;top:13.26px;font-size:12.8px;font-weight:700;color:#0a0a0a;transform-origin:100% 0;transform:scaleX(1.1130);"><span style="font-size:.87em">0,00</span> €</span>
</div>
<div class="row lot" style="top:557.5px;height:39px">
<svg style="position:absolute;left:8.6px;top:17.6px" width="2.7" height="4.7" viewBox="0 0 3 5.2"><path d="M0 0 L0.5 0 L3 2.6 L0.5 5.2 L0 5.2 L0.6 2.6 Z" fill="#243040"/></svg>
<div class="cb" style="left:23.25px;top:10.6px"></div>
<span class="t" style="left:45.25px;top:12.70px;font-size:13px;font-weight:700;color:#0f1113;transform-origin:0 0;transform:scaleX(0.8816);">F PLANCHER HAUT RDC</span>
<div class="sel" style="left:587.25px;top:5.00px;width:178.25px;height:29.00px"><svg class="chev" style="left:151.35px;top:10.30px" viewBox="0 0 11 7" width="10.4" height="6.6"><path d="M0.8 0.9 L5.5 5.6 L10.2 0.9" fill="none" stroke="#596066" stroke-width="1.3" stroke-linecap="round" stroke-linejoin="round"/></svg><span class="t" style="left:9.50px;top:7.00px;font-size:13px;font-weight:400;color:#24282c;transform-origin:0 0;transform:scaleX(0.8863);-webkit-text-stroke:0.3px #24282c;">Non concerné</span></div>
<div class="sel" style="left:774.25px;top:5.00px;width:366.25px;height:29.00px"><svg class="chev" style="left:339.35px;top:10.30px" viewBox="0 0 11 7" width="10.4" height="6.6"><path d="M0.8 0.9 L5.5 5.6 L10.2 0.9" fill="none" stroke="#596066" stroke-width="1.3" stroke-linecap="round" stroke-linejoin="round"/></svg><span class="t" style="left:9.50px;top:7.00px;font-size:13px;font-weight:400;color:#24282c;transform-origin:0 0;transform:scaleX(0.8860);-webkit-text-stroke:0.3px #24282c;">– Entreprise (lot) –</span></div>
<span class="t" style="right:5.10px;top:13.26px;font-size:12.8px;font-weight:700;color:#0a0a0a;transform-origin:100% 0;transform:scaleX(1.1130);"><span style="font-size:.87em">0,00</span> €</span>
</div>
<div class="row lot" style="top:596.5px;height:39px">
<svg style="position:absolute;left:8.6px;top:17.6px" width="2.7" height="4.7" viewBox="0 0 3 5.2"><path d="M0 0 L0.5 0 L3 2.6 L0.5 5.2 L0 5.2 L0.6 2.6 Z" fill="#243040"/></svg>
<div class="cb" style="left:23.25px;top:10.6px"></div>
<span class="t" style="left:45.25px;top:12.70px;font-size:13px;font-weight:700;color:#0f1113;transform-origin:0 0;transform:scaleX(0.8880);">F PLANCHER HAUT ETAGE</span>
<div class="sel" style="left:587.25px;top:5.00px;width:178.25px;height:29.00px"><svg class="chev" style="left:151.35px;top:10.30px" viewBox="0 0 11 7" width="10.4" height="6.6"><path d="M0.8 0.9 L5.5 5.6 L10.2 0.9" fill="none" stroke="#596066" stroke-width="1.3" stroke-linecap="round" stroke-linejoin="round"/></svg><span class="t" style="left:9.50px;top:7.00px;font-size:13px;font-weight:400;color:#24282c;transform-origin:0 0;transform:scaleX(0.8863);-webkit-text-stroke:0.3px #24282c;">Non concerné</span></div>
<div class="sel" style="left:774.25px;top:5.00px;width:366.25px;height:29.00px"><svg class="chev" style="left:339.35px;top:10.30px" viewBox="0 0 11 7" width="10.4" height="6.6"><path d="M0.8 0.9 L5.5 5.6 L10.2 0.9" fill="none" stroke="#596066" stroke-width="1.3" stroke-linecap="round" stroke-linejoin="round"/></svg><span class="t" style="left:9.50px;top:7.00px;font-size:13px;font-weight:400;color:#24282c;transform-origin:0 0;transform:scaleX(0.8860);-webkit-text-stroke:0.3px #24282c;">– Entreprise (lot) –</span></div>
<span class="t" style="right:5.10px;top:13.26px;font-size:12.8px;font-weight:700;color:#0a0a0a;transform-origin:100% 0;transform:scaleX(1.1130);"><span style="font-size:.87em">0,00</span> €</span>
</div>
<div class="row lot" style="top:635.5px;height:39px">
<svg style="position:absolute;left:8.6px;top:17.6px" width="2.7" height="4.7" viewBox="0 0 3 5.2"><path d="M0 0 L0.5 0 L3 2.6 L0.5 5.2 L0 5.2 L0.6 2.6 Z" fill="#243040"/></svg>
<div class="cb" style="left:23.25px;top:10.6px"></div>
<span class="t" style="left:45.25px;top:12.70px;font-size:13px;font-weight:700;color:#0f1113;transform-origin:0 0;transform:scaleX(0.8792);">F PLANCHER TOITURE TERRASSE</span>
<div class="sel" style="left:587.25px;top:5.00px;width:178.25px;height:29.00px"><svg class="chev" style="left:151.35px;top:10.30px" viewBox="0 0 11 7" width="10.4" height="6.6"><path d="M0.8 0.9 L5.5 5.6 L10.2 0.9" fill="none" stroke="#596066" stroke-width="1.3" stroke-linecap="round" stroke-linejoin="round"/></svg><span class="t" style="left:9.50px;top:7.00px;font-size:13px;font-weight:400;color:#24282c;transform-origin:0 0;transform:scaleX(0.8863);-webkit-text-stroke:0.3px #24282c;">Non concerné</span></div>
<div class="sel" style="left:774.25px;top:5.00px;width:366.25px;height:29.00px"><svg class="chev" style="left:339.35px;top:10.30px" viewBox="0 0 11 7" width="10.4" height="6.6"><path d="M0.8 0.9 L5.5 5.6 L10.2 0.9" fill="none" stroke="#596066" stroke-width="1.3" stroke-linecap="round" stroke-linejoin="round"/></svg><span class="t" style="left:9.50px;top:7.00px;font-size:13px;font-weight:400;color:#24282c;transform-origin:0 0;transform:scaleX(0.8860);-webkit-text-stroke:0.3px #24282c;">– Entreprise (lot) –</span></div>
<span class="t" style="right:5.10px;top:13.26px;font-size:12.8px;font-weight:700;color:#0a0a0a;transform-origin:100% 0;transform:scaleX(1.1130);"><span style="font-size:.87em">0,00</span> €</span>
</div>
<div class="row lot" style="top:674.5px;height:39px">
<svg style="position:absolute;left:8.6px;top:17.6px" width="2.7" height="4.7" viewBox="0 0 3 5.2"><path d="M0 0 L0.5 0 L3 2.6 L0.5 5.2 L0 5.2 L0.6 2.6 Z" fill="#243040"/></svg>
<div class="cb" style="left:23.25px;top:10.6px"></div>
<span class="t" style="left:45.25px;top:12.70px;font-size:13px;font-weight:700;color:#0f1113;transform-origin:0 0;transform:scaleX(0.8558);">F FERRAILLAGE</span>
<div class="sel" style="left:587.25px;top:5.00px;width:178.25px;height:29.00px"><svg class="chev" style="left:151.35px;top:10.30px" viewBox="0 0 11 7" width="10.4" height="6.6"><path d="M0.8 0.9 L5.5 5.6 L10.2 0.9" fill="none" stroke="#596066" stroke-width="1.3" stroke-linecap="round" stroke-linejoin="round"/></svg><span class="t" style="left:9.50px;top:7.00px;font-size:13px;font-weight:400;color:#24282c;transform-origin:0 0;transform:scaleX(0.8863);-webkit-text-stroke:0.3px #24282c;">Non concerné</span></div>
<div class="sel" style="left:774.25px;top:5.00px;width:366.25px;height:29.00px"><svg class="chev" style="left:339.35px;top:10.30px" viewBox="0 0 11 7" width="10.4" height="6.6"><path d="M0.8 0.9 L5.5 5.6 L10.2 0.9" fill="none" stroke="#596066" stroke-width="1.3" stroke-linecap="round" stroke-linejoin="round"/></svg><span class="t" style="left:9.50px;top:7.00px;font-size:13px;font-weight:400;color:#24282c;transform-origin:0 0;transform:scaleX(0.8860);-webkit-text-stroke:0.3px #24282c;">– Entreprise (lot) –</span></div>
<span class="t" style="right:5.10px;top:13.26px;font-size:12.8px;font-weight:700;color:#0a0a0a;transform-origin:100% 0;transform:scaleX(1.1130);"><span style="font-size:.87em">0,00</span> €</span>
</div>
<div class="row lot nb" style="top:713.5px;height:39px">
<svg style="position:absolute;left:8.6px;top:17.6px" width="2.7" height="4.7" viewBox="0 0 3 5.2"><path d="M0 0 L0.5 0 L3 2.6 L0.5 5.2 L0 5.2 L0.6 2.6 Z" fill="#243040"/></svg>
<div class="cb" style="left:23.25px;top:10.6px"></div>
<span class="t" style="left:45.25px;top:12.70px;font-size:13px;font-weight:700;color:#0f1113;transform-origin:0 0;transform:scaleX(0.8675);">F PLANCHER SOUS SOL</span>
<div class="sel" style="left:587.25px;top:5.00px;width:178.25px;height:29.00px"><svg class="chev" style="left:151.35px;top:10.30px" viewBox="0 0 11 7" width="10.4" height="6.6"><path d="M0.8 0.9 L5.5 5.6 L10.2 0.9" fill="none" stroke="#596066" stroke-width="1.3" stroke-linecap="round" stroke-linejoin="round"/></svg><span class="t" style="left:9.50px;top:7.00px;font-size:13px;font-weight:400;color:#24282c;transform-origin:0 0;transform:scaleX(0.8863);-webkit-text-stroke:0.3px #24282c;">Non concerné</span></div>
<div class="sel" style="left:774.25px;top:5.00px;width:366.25px;height:29.00px"><svg class="chev" style="left:339.35px;top:10.30px" viewBox="0 0 11 7" width="10.4" height="6.6"><path d="M0.8 0.9 L5.5 5.6 L10.2 0.9" fill="none" stroke="#596066" stroke-width="1.3" stroke-linecap="round" stroke-linejoin="round"/></svg><span class="t" style="left:9.50px;top:7.00px;font-size:13px;font-weight:400;color:#24282c;transform-origin:0 0;transform:scaleX(0.8860);-webkit-text-stroke:0.3px #24282c;">– Entreprise (lot) –</span></div>
<span class="t" style="right:5.10px;top:13.26px;font-size:12.8px;font-weight:700;color:#0a0a0a;transform-origin:100% 0;transform:scaleX(1.1130);"><span style="font-size:.87em">0,00</span> €</span>
</div>
<div class="row cat" style="top:752.5px;height:39px">
<span class="t" style="left:3.70px;top:12.60px;font-size:13px;font-weight:700;color:#0a0906;transform-origin:0 0;transform:scaleX(0.8824);">ECHAFAUDAGE</span>
<div class="sel nob" style="left:587.25px;top:5.20px;width:178.25px;height:29.00px"><svg class="chev" style="left:151.35px;top:10.30px" viewBox="0 0 11 7" width="10.4" height="6.6"><path d="M0.8 0.9 L5.5 5.6 L10.2 0.9" fill="none" stroke="#596066" stroke-width="1.3" stroke-linecap="round" stroke-linejoin="round"/></svg><span class="t" style="left:9.50px;top:7.00px;font-size:13px;font-weight:400;color:#24282c;transform-origin:0 0;transform:scaleX(0.8846);-webkit-text-stroke:0.3px #24282c;">---</span></div>
<span class="t" style="right:5.10px;top:13.26px;font-size:12.8px;font-weight:700;color:#fff6dc;transform-origin:100% 0;transform:scaleX(1.1130);"><span style="font-size:.87em">0,00</span> €</span>
</div>
<div class="row lot nb" style="top:791.5px;height:39px">
<svg style="position:absolute;left:8.6px;top:17.6px" width="2.7" height="4.7" viewBox="0 0 3 5.2"><path d="M0 0 L0.5 0 L3 2.6 L0.5 5.2 L0 5.2 L0.6 2.6 Z" fill="#243040"/></svg>
<div class="cb" style="left:23.25px;top:10.6px"></div>
<span class="t" style="left:45.25px;top:12.70px;font-size:13px;font-weight:700;color:#0f1113;transform-origin:0 0;transform:scaleX(0.8794);">ECHAFAUDAGE</span>
<div class="sel" style="left:587.25px;top:5.00px;width:178.25px;height:29.00px"><svg class="chev" style="left:151.35px;top:10.30px" viewBox="0 0 11 7" width="10.4" height="6.6"><path d="M0.8 0.9 L5.5 5.6 L10.2 0.9" fill="none" stroke="#596066" stroke-width="1.3" stroke-linecap="round" stroke-linejoin="round"/></svg><span class="t" style="left:9.50px;top:7.00px;font-size:13px;font-weight:400;color:#24282c;transform-origin:0 0;transform:scaleX(0.8863);-webkit-text-stroke:0.3px #24282c;">Non concerné</span></div>
<div class="sel" style="left:774.25px;top:5.00px;width:366.25px;height:29.00px"><svg class="chev" style="left:339.35px;top:10.30px" viewBox="0 0 11 7" width="10.4" height="6.6"><path d="M0.8 0.9 L5.5 5.6 L10.2 0.9" fill="none" stroke="#596066" stroke-width="1.3" stroke-linecap="round" stroke-linejoin="round"/></svg><span class="t" style="left:9.50px;top:7.00px;font-size:13px;font-weight:400;color:#24282c;transform-origin:0 0;transform:scaleX(0.8376);-webkit-text-stroke:0.3px #24282c;">GLOBAL ECHAFAUDAGE</span></div>
<span class="t" style="right:5.10px;top:13.26px;font-size:12.8px;font-weight:700;color:#0a0a0a;transform-origin:100% 0;transform:scaleX(1.1130);"><span style="font-size:.87em">0,00</span> €</span>
</div>
<div class="row cat" style="top:830.5px;height:39px">
<span class="t" style="left:3.70px;top:12.60px;font-size:13px;font-weight:700;color:#0a0906;transform-origin:0 0;transform:scaleX(0.9026);">FOURNITURE CHARPENTE</span>
<div class="sel nob" style="left:587.25px;top:5.20px;width:178.25px;height:29.00px"><svg class="chev" style="left:151.35px;top:10.30px" viewBox="0 0 11 7" width="10.4" height="6.6"><path d="M0.8 0.9 L5.5 5.6 L10.2 0.9" fill="none" stroke="#596066" stroke-width="1.3" stroke-linecap="round" stroke-linejoin="round"/></svg><span class="t" style="left:9.50px;top:7.00px;font-size:13px;font-weight:400;color:#24282c;transform-origin:0 0;transform:scaleX(0.8846);-webkit-text-stroke:0.3px #24282c;">---</span></div>
<span class="t" style="right:5.10px;top:13.26px;font-size:12.8px;font-weight:700;color:#fff6dc;transform-origin:100% 0;transform:scaleX(1.1130);"><span style="font-size:.87em">0,00</span> €</span>
</div>
<div style="position:absolute;left:1870.2px;top:135px;width:2px;height:126px;background:#7d7d7d"></div>
</div>
</div>
</body></html>
